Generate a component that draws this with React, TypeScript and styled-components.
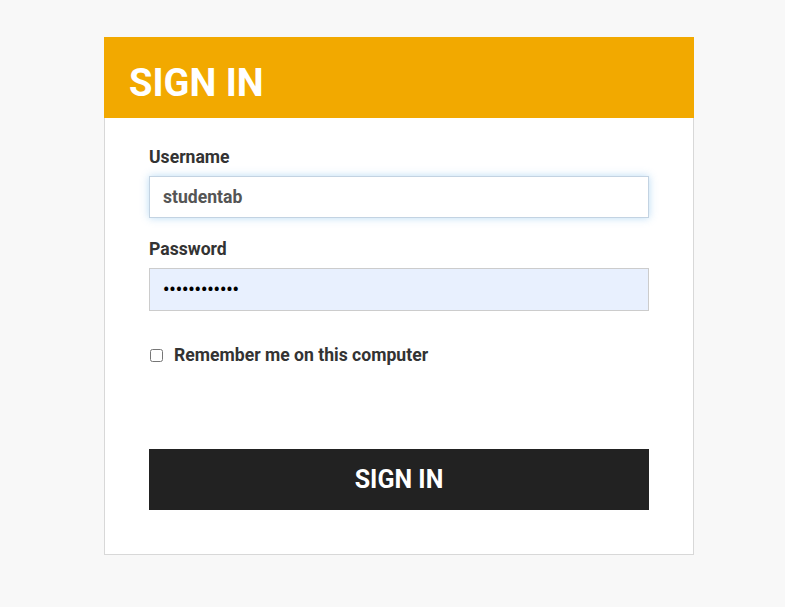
import React from "react";
import styled, { createGlobalStyle } from "styled-components";

const Global = createGlobalStyle`
  html, body { margin: 0; padding: 0; background: #f8f8f8; }
  body { font-family: Roboto, "Liberation Sans", sans-serif; }
  * { box-sizing: border-box; }
`;

const Page = styled.div`
  padding: 37px 0 0 104px;
  min-height: 607px;
`;

const Card = styled.div`
  width: 590px;
`;

const Header = styled.div`
  background: #f2a900;
  height: 81px;
  display: flex;
  align-items: center;
  padding: 10px 25px 0;
`;

const Title = styled.h1`
  margin: 0;
  color: #fff;
  font-size: 38px;
  font-weight: 700;
  letter-spacing: 0;
`;

const Body = styled.form`
  background: #fff;
  border: 1px solid #d8d8d8;
  border-top: none;
  padding: 29px 44px 44px;
  display: flex;
  flex-direction: column;
`;

const Label = styled.label`
  font-size: 17.6px;
  line-height: 20px;
  font-weight: 700;
  color: #333;
  margin-bottom: 9px;
`;

const Input = styled.input<{ $focused?: boolean; $autofill?: boolean }>`
  width: 500px;
  height: ${(p) => (p.$autofill ? "43px" : "42px")};
  border: 1px solid #ccc;
  padding: 0 13px;
  font-family: Roboto, "Liberation Sans", sans-serif;
  font-size: 17.6px;
  font-weight: 700;
  color: #555;
  outline: none;
  background: ${(p) => (p.$autofill ? "#e8f0fe" : "#fff")};
  box-shadow: ${(p) =>
    p.$focused ? "0 0 8px rgba(102, 175, 233, 0.45)" : "none"};
  border-color: ${(p) => (p.$focused ? "#c3d3e2" : "#ccc")};
  margin-bottom: 21px;
  &[type="password"] {
    color: #000;
  }
`;

const CheckRow = styled.label`
  display: flex;
  align-items: center;
  gap: 11px;
  margin-top: 13px;
  font-size: 17.6px;
  line-height: 20px;
  font-weight: 700;
  color: #333;
`;

const Check = styled.input`
  margin: 0 0 0 1px;
  width: 13px;
  height: 13px;
`;

const Button = styled.button`
  margin-top: 84px;
  width: 500px;
  height: 61px;
  background: #222;
  border: none;
  color: #fff;
  font-family: Roboto, "Liberation Sans", sans-serif;
  font-size: 25px;
  font-weight: 700;
  cursor: pointer;
`;

export default function App() {
  return (
    <Page>
      <Global />
      <Card>
        <Header>
          <Title>SIGN IN</Title>
        </Header>
        <Body onSubmit={(e) => e.preventDefault()}>
          <Label htmlFor="u">Username</Label>
          <Input id="u" $focused defaultValue="studentab" />
          <Label htmlFor="p">Password</Label>
          <Input id="p" type="password" $autofill defaultValue="passwordxyzw" />
          <CheckRow>
            <Check type="checkbox" />
            Remember me on this computer
          </CheckRow>
          <Button type="submit">SIGN IN</Button>
        </Body>
      </Card>
    </Page>
  );
}
